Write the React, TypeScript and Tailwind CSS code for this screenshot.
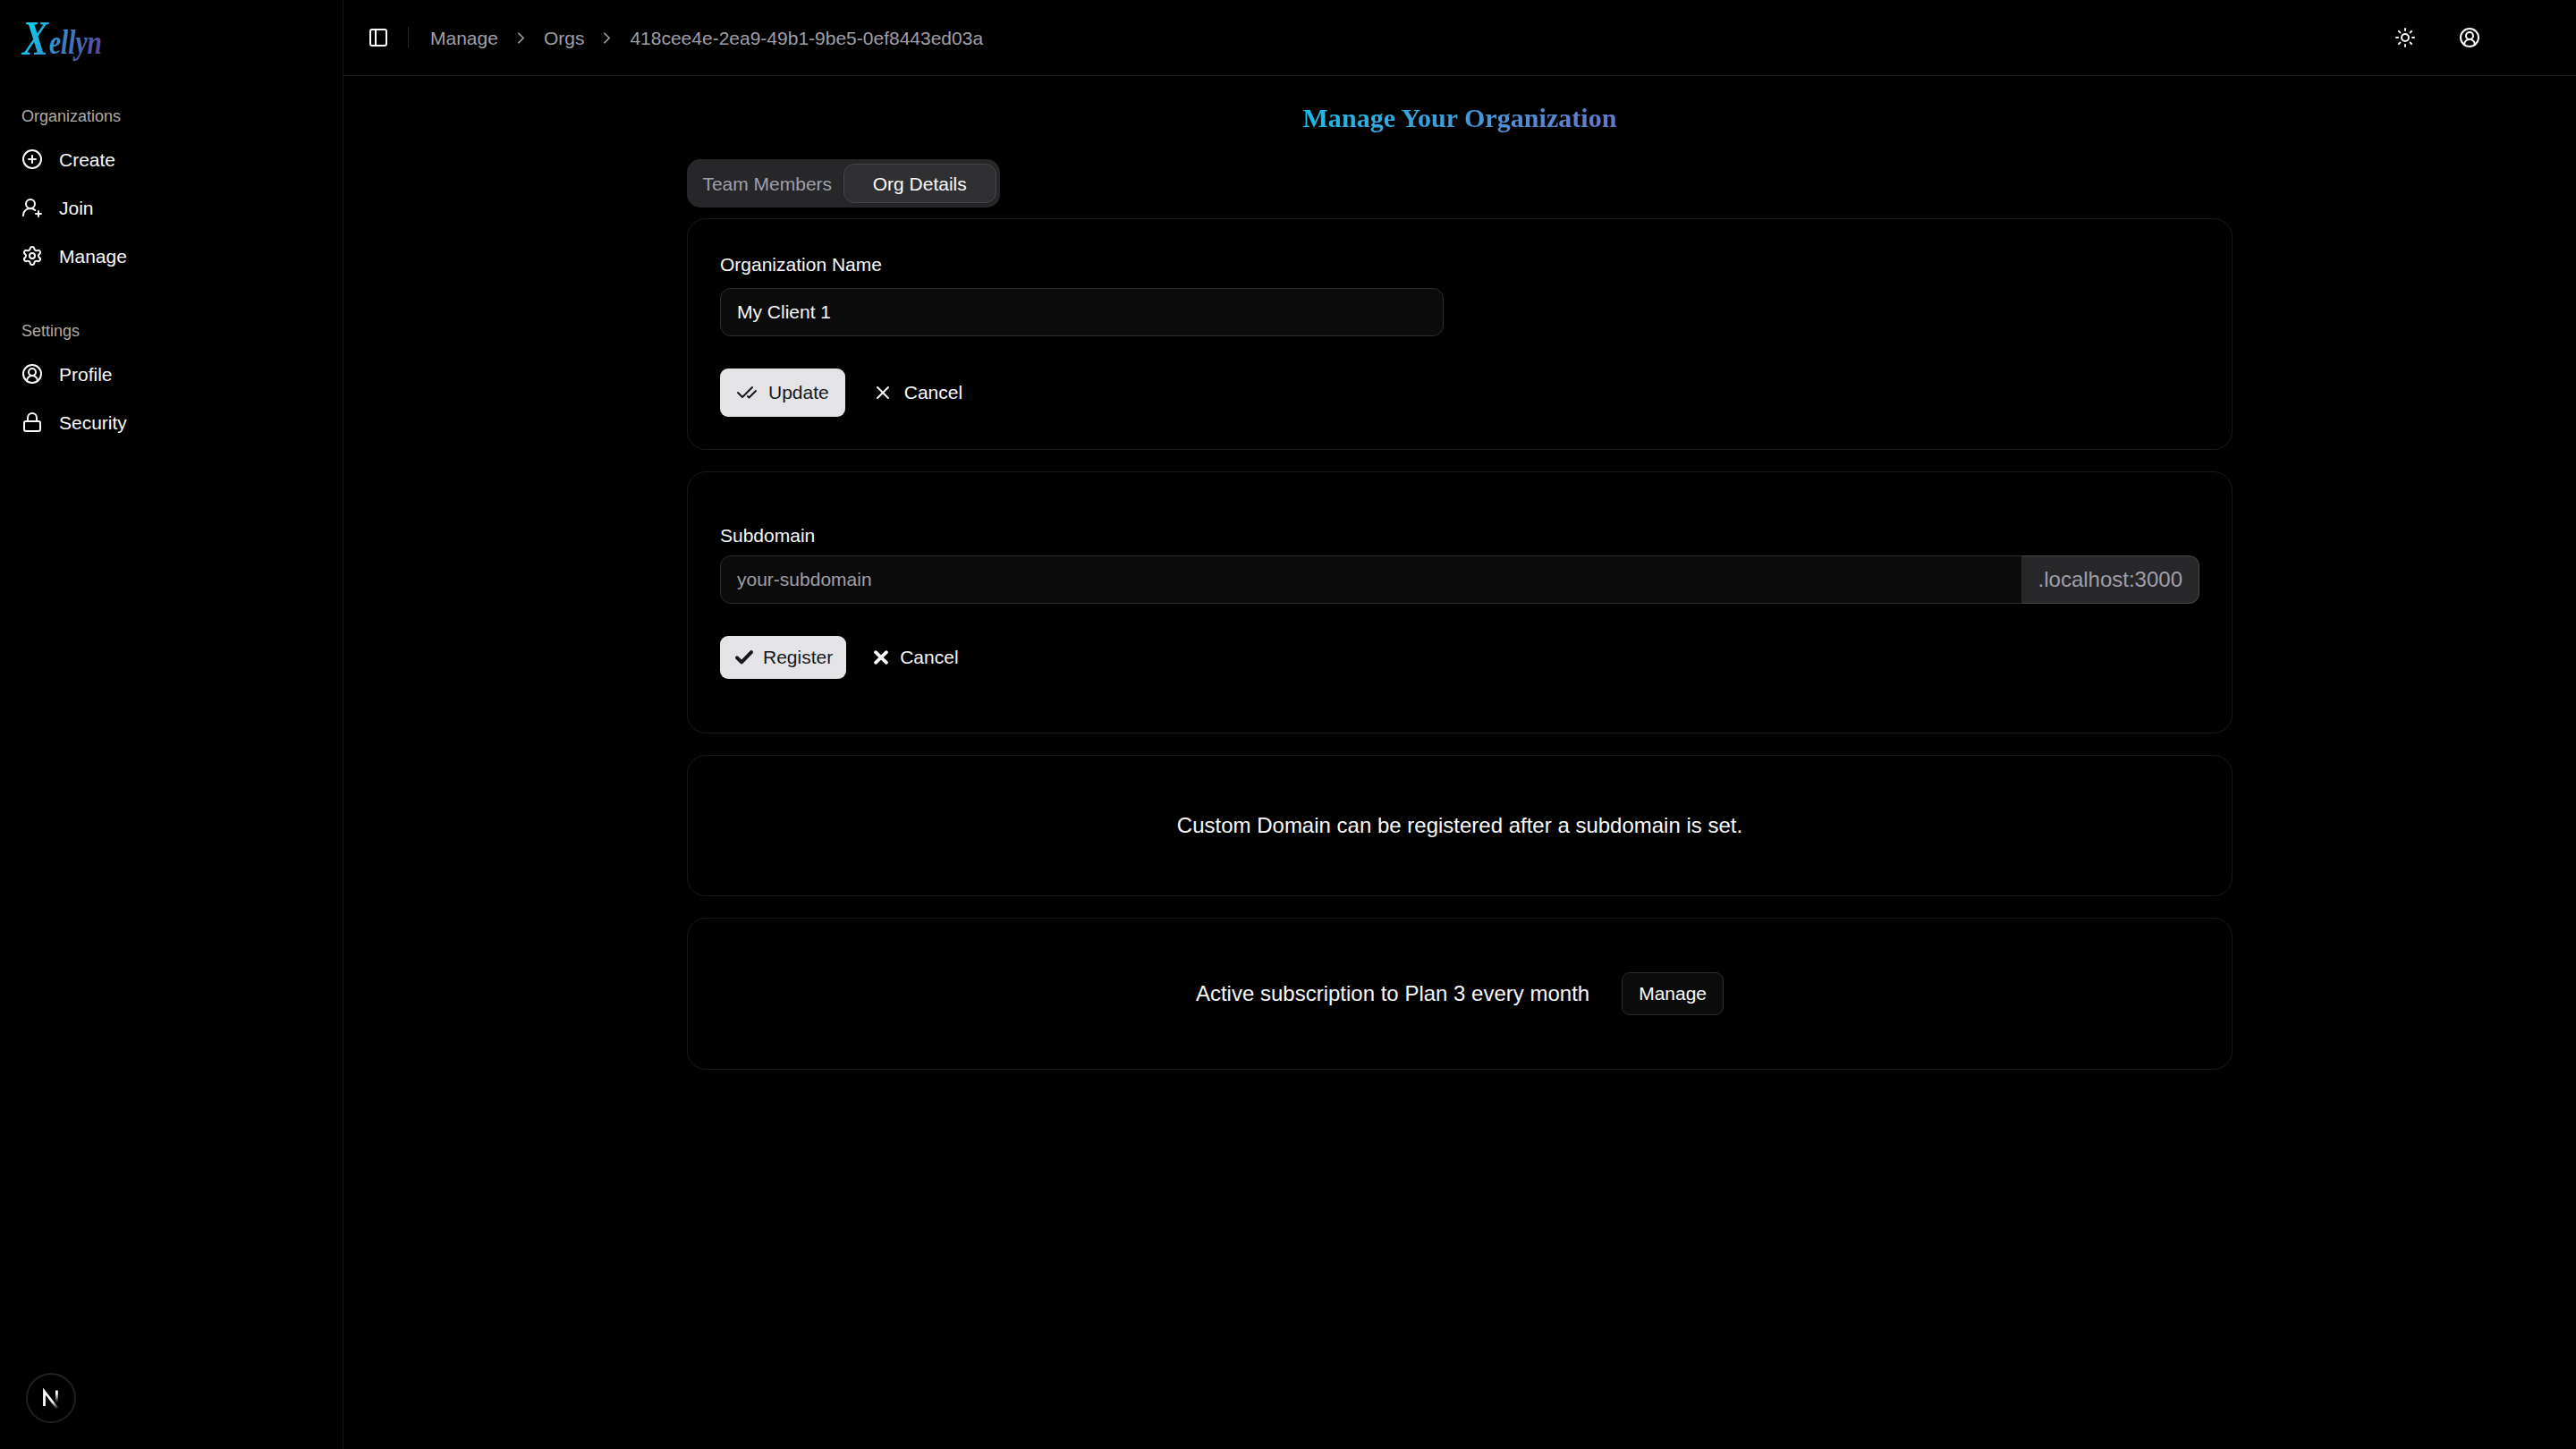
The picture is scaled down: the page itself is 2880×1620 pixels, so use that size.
import {
    CheckCheck,
    ChevronRight,
    CirclePlus,
    CircleUserRound,
    Lock,
    PanelLeft,
    Settings,
    Sun,
    UserRoundPlus,
    X,
} from 'lucide-react'

const groups = [
    {
        label: 'Organizations',
        items: [
            { name: 'Create', icon: CirclePlus },
            { name: 'Join', icon: UserRoundPlus },
            { name: 'Manage', icon: Settings },
        ],
    },
    {
        label: 'Settings',
        items: [
            { name: 'Profile', icon: CircleUserRound },
            { name: 'Security', icon: Lock },
        ],
    },
]

const crumbs = ['Manage', 'Orgs', '418cee4e-2ea9-49b1-9be5-0ef8443ed03a']

const Logo = () => {
    return (
        <svg width="96" height="54" viewBox="0 0 96 54" className="block overflow-visible">
            <defs>
                <linearGradient id="logo" gradientUnits="userSpaceOnUse" x1="0" y1="0" x2="92" y2="40">
                    <stop offset="0" stopColor="#00e0f5" />
                    <stop offset="0.5" stopColor="#3a86c8" />
                    <stop offset="1" stopColor="#5b3f92" />
                </linearGradient>
            </defs>
            <text y="41" fill="url(#logo)" fontFamily="Liberation Serif, serif" fontStyle="italic" fontWeight="700">
                <tspan x="1" fontSize="55" textLength="29" lengthAdjust="spacingAndGlyphs">X</tspan>
                <tspan x="31" y="40" fontSize="38" textLength="59" lengthAdjust="spacingAndGlyphs">ellyn</tspan>
            </text>
        </svg>
    )
}

const Sidebar = () => {
    return (
        <aside className="w-96 shrink-0 border-r border-[#1a1a1a] flex flex-col px-6 pt-5">
            <Logo />
            <nav className="mt-[32px] flex flex-col gap-[33px]">
                {groups.map((group) => (
                    <div key={group.label}>
                        <div className="h-12 -mb-[3px] flex items-center text-[18px] text-[#ababac]">{group.label}</div>
                        {group.items.map(({ name, icon: Icon }) => (
                            <a key={name} className="h-[54px] flex items-center gap-[18px] text-[21px]">
                                <Icon size={24} />
                                <span className="pt-px">{name}</span>
                            </a>
                        ))}
                    </div>
                ))}
            </nav>
        </aside>
    )
}

const Header = () => {
    return (
        <header className="h-[85px] border-b border-[#1a1a1a] flex items-center justify-between pl-[27px] pr-[107px]">
            <div className="flex items-center">
                <PanelLeft size={24} />
                <div className="ml-[21px] mr-6 h-6 w-px bg-[#262626]" />
                <div className="flex items-center gap-[15px] text-[21px] text-[#9f9fa9]">
                    {crumbs.map((crumb, i) => (
                        <div key={crumb} className="flex items-center gap-[15px]">
                            {i > 0 && <ChevronRight size={21} />}
                            <span className="pt-0.5">{crumb}</span>
                        </div>
                    ))}
                </div>
            </div>
            <div className="flex items-center gap-12">
                <Sun size={24} />
                <CircleUserRound size={24} />
            </div>
        </header>
    )
}

const NameCard = () => {
    return (
        <section className="h-[259px] rounded-[21px] border border-[#191919] px-9 pt-[36px]">
            <label className="block text-[21px] leading-[30px]">Organization Name</label>
            <div className="mt-[11px] h-[54px] w-[809px] rounded-xl border border-[#2c2c2c] bg-[#0b0b0b] px-[18px] flex items-center text-[21px]">
                My Client 1
            </div>
            <div className="mt-9 flex gap-3 text-[21px]">
                <button className="h-[54px] rounded-[9px] bg-[#e4e4e7] text-[#18181b] px-[18px] flex items-center gap-3">
                    <CheckCheck size={24} />
                    Update
                </button>
                <button className="h-[54px] px-[18px] flex items-center gap-3">
                    <X size={24} />
                    Cancel
                </button>
            </div>
        </section>
    )
}

const SubdomainCard = () => {
    return (
        <section className="mt-6 h-[293px] rounded-[21px] border border-[#191919] px-9 pt-[60px]">
            <label className="block text-[21px] leading-[21px]">Subdomain</label>
            <div className="mt-3 flex h-[54px]">
                <div className="flex-1 rounded-l-xl border border-[#2c2c2c] bg-[#0b0b0b] px-[18px] flex items-center text-[21px] text-[#9f9fa9]">
                    your-subdomain
                </div>
                <div className="rounded-r-xl border border-l-0 border-[#47474a] bg-[#27272a] px-[18px] flex items-center text-2xl text-[#9f9fa9]">
                    .localhost:3000
                </div>
            </div>
            <div className="mt-9 flex gap-3 text-[21px]">
                <button className="h-12 rounded-[9px] bg-[#e4e4e7] text-[#18181b] px-[15px] flex items-center gap-[9px]">
                    <svg width="24" height="24" fill="none" stroke="currentColor" strokeWidth="4" strokeLinecap="round" strokeLinejoin="round">
                        <path d="M4 12.4 9.1 17.3 20 6.2" />
                    </svg>
                    Register
                </button>
                <button className="h-12 px-[15px] flex items-center gap-[9px]">
                    <svg width="24" height="24" fill="none" stroke="currentColor" strokeWidth="3.8" strokeLinecap="round">
                        <path d="M6 6.2 18 17.8M18 6.2 6 17.8" />
                    </svg>
                    Cancel
                </button>
            </div>
        </section>
    )
}

const DevBadge = () => {
    return (
        <div className="fixed left-[29px] top-[1535px] size-[56px] rounded-full border-2 border-[#1f1f1f] bg-black flex items-center justify-center">
            <svg width="20" height="24" viewBox="0 0 20 24" fill="none">
                <defs>
                    <linearGradient id="bar" x1="0" y1="3" x2="0" y2="17" gradientUnits="userSpaceOnUse">
                        <stop offset="0.3" stopColor="#fff" />
                        <stop offset="1" stopColor="#fff" stopOpacity="0" />
                    </linearGradient>
                    <linearGradient id="slash" x1="12" y1="16" x2="18" y2="24" gradientUnits="userSpaceOnUse">
                        <stop offset="0" stopColor="#fff" />
                        <stop offset="1" stopColor="#fff" stopOpacity="0" />
                    </linearGradient>
                </defs>
                <path d="M2.5 21V4.5L17.2 23.5" stroke="url(#slash)" strokeWidth="2.8" />
                <path d="M16.4 3.5V17" stroke="url(#bar)" strokeWidth="2.8" />
            </svg>
        </div>
    )
}

const App = () => {
    return (
        <div className="w-screen h-screen overflow-hidden bg-black text-[#fafafa] font-['Liberation_Sans',sans-serif] flex">
            <Sidebar />
            <div className="flex-1">
                <Header />
                <main className="w-[1728px] mx-auto pt-[29px]">
                    <div className="flex justify-center">
                        <h1 className="bg-linear-135 from-[#0abfe8] via-[#3f9ad8] to-[#6674ca] bg-clip-text text-transparent font-['Liberation_Serif',serif] font-bold text-[30px] leading-9 tracking-[0.04px]">
                            Manage Your Organization
                        </h1>
                    </div>
                    <div className="mt-[28px] mb-3 h-[54px] w-[350px] rounded-[15px] bg-[#27272a] p-[4.5px] grid grid-cols-2 items-center text-[21px]">
                        <div className="pt-px text-center whitespace-nowrap text-[#9f9fa9]">Team Members</div>
                        <div className="h-11 rounded-xl border border-[#47474a] bg-[#303033] pt-px flex items-center justify-center shadow-sm">
                            Org Details
                        </div>
                    </div>
                    <NameCard />
                    <SubdomainCard />
                    <section className="mt-6 h-[158px] rounded-[21px] border border-[#191919] flex items-center justify-center text-2xl">
                        Custom Domain can be registered after a subdomain is set.
                    </section>
                    <section className="mt-6 h-[170px] rounded-[21px] border border-[#191919] flex items-center justify-center gap-9 text-2xl">
                        Active subscription to Plan 3 every month
                        <button className="h-12 rounded-[9px] border border-[#2c2c2c] bg-[#0b0b0b] px-[18px] text-[21px]">
                            Manage
                        </button>
                    </section>
                </main>
            </div>
            <DevBadge />
        </div>
    )
}

export default App
